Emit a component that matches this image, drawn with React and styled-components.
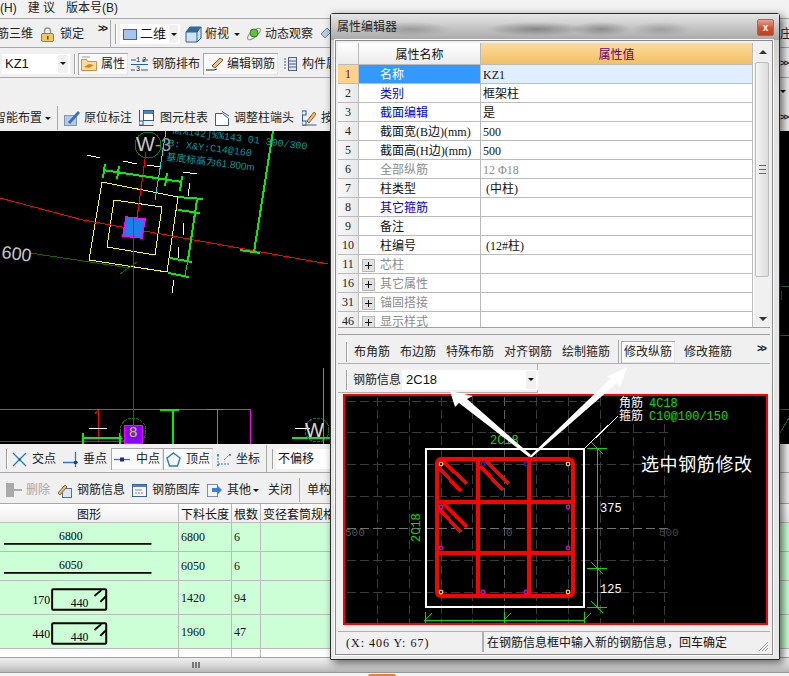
import React from "react";
import styled, { createGlobalStyle, css } from "styled-components";

const CJK = `"Liberation Sans", "Noto Sans CJK SC", sans-serif`;
const SERIF = `"Liberation Serif", "Noto Sans CJK SC", serif`;
const MONO = `"Liberation Mono", "Noto Sans CJK SC", monospace`;

const GlobalStyle = createGlobalStyle`
  html, body {
    margin: 0;
    background: #f0f0f0;
    overflow: hidden;
  }
`;

const Page = styled.div`
  position: relative;
  width: 789px;
  height: 676px;
  overflow: hidden;
  display: flex;
  flex-direction: column;
  background: #f0f0f0;
  font: 12px/16px ${CJK};
  color: #111;
`;

const MenuBar = styled.div`
  height: 18px;
  flex: none;
  display: flex;
  align-items: center;
  padding-bottom: 2px;
  box-sizing: border-box;
  background: #f2f2f2;
`;

const MenuItem = styled.span`
  margin-left: ${p => p.$ml || 0}px;
  white-space: pre;
  color: #222;
`;

const Toolbar = styled.div`
  height: ${p => p.$h}px;
  flex: none;
  box-sizing: border-box;
  display: flex;
  align-items: center;
  overflow: hidden;
  white-space: nowrap;
  background: #f0f0f0;
  padding-top: ${p => p.$pt || 0}px;
  ${p => p.$top && "border-top: 1px solid #a8a8a8;"}
  ${p => p.$line && "border-bottom: 1px solid #a8a8a8;"}
`;

const Item = styled.div`
  flex: none;
  display: flex;
  align-items: center;
  gap: ${p => (p.$gap === undefined ? 4 : p.$gap)}px;
  margin-left: ${p => p.$ml || 0}px;
  color: ${p => (p.$off ? "#a8a8a8" : "#222")};
  ${p =>
    p.$on &&
    css`
      height: 22px;
      padding: 0 3px;
      background: #fafafa;
      box-shadow: inset 1px 1px 0 #a8a8a8, inset -1px -1px 0 #e4e4e4;
    `}
`;

const Edge = styled.div`
  flex: none;
  margin-left: auto;
  width: 9px;
  font: 700 9.5px/12px ${MONO};
  letter-spacing: -2px;
  overflow: hidden;
  color: #222;
`;

const EdgeGlyph = styled(Edge)`
  font: 12px/16px ${CJK};
  letter-spacing: 0;
`;

const Grip = styled.i`
  flex: none;
  display: block;
  width: 2px;
  height: 20px;
  margin-left: ${p => p.$ml || 0}px;
  border-left: 1px solid #a0a0a0;
  border-right: 1px solid #fff;
  box-sizing: border-box;
`;

const Sep = styled.i`
  flex: none;
  display: block;
  width: 1px;
  height: ${p => p.$h || 24}px;
  margin-left: ${p => p.$ml || 0}px;
  background: #a8a8a8;
`;

const More = styled.span`
  flex: none;
  margin-left: ${p => p.$ml || 0}px;
  font: 700 10px/10px ${MONO};
  letter-spacing: -2px;
  width: 9px;
  align-self: flex-start;
  margin-top: 4px;
`;

const Caret = styled.i`
  flex: none;
  display: block;
  width: 0;
  height: 0;
  margin-left: ${p => p.$ml || 0}px;
  border: 3px solid transparent;
  border-top: 3px solid #111;
  border-bottom: 0;
`;

const Select = styled.div`
  flex: none;
  box-sizing: border-box;
  display: flex;
  align-items: center;
  width: ${p => p.$w}px;
  height: 20px;
  margin-left: ${p => p.$ml || 0}px;
  padding-left: ${p => p.$pad || 3}px;
  gap: 3px;
  background: #fff;
  font-size: ${p => p.$fs || 13}px;
`;

const SelectArrow = styled.span`
  margin-left: auto;
  margin-right: 2px;
  width: 10px;
  height: 100%;
  max-height: 18px;
  background: #f0f0f0;
  display: flex;
  align-items: center;
  justify-content: center;
`;

const Cad = styled.svg`
  display: block;
  flex: none;
  width: 789px;
  height: 313px;
  background: #000;
`;

const Table = styled.div`
  flex: none;
  height: 153px;
  background: #fff;
  font-family: ${SERIF};
`;

const TableRow = styled.div`
  display: grid;
  grid-template-columns: 179px 53px 29px 1fr;
  height: ${p => p.$h}px;
  box-sizing: border-box;
  background: ${p => (p.$green ? "#ccffd6" : p.$head ? "linear-gradient(#fff, #efefef)" : "#fff")};
  ${p => !p.$last && "border-bottom: 1px solid #bbb;"}
`;

const Cell = styled.div`
  border-right: 1px solid #bbb;
  padding-left: 2px;
  display: flex;
  align-items: center;
  overflow: hidden;
  white-space: nowrap;
  ${p => p.$center && "justify-content: center; padding-left: 0;"}
  ${p => p.$head && `font-family: ${CJK}; font-size: 12px; padding-top: 3px;`}
  &:last-child {
    border-right: 0;
  }
`;

const Shape = styled.svg`
  display: block;
  width: 179px;
  height: 100%;
`;

const HScroll = styled.div`
  flex: none;
  height: 15px;
  background: linear-gradient(#f0f0f0, #d8d8d8 50%, #b8b8b8);
  border-top: 1px solid #a0a0a0;
  box-sizing: border-box;
  padding-left: 192px;
  display: flex;
  align-items: center;
  gap: 1px;
`;

const HScrollGrip = styled.i`
  display: block;
  width: 2px;
  height: 6px;
  background: #777;
`;

const Footer = styled.div`
  flex: 1;
  background: #f4f4f4;
  border-top: 1px solid #999;
`;

const Orange = styled.i`
  position: absolute;
  left: 368px;
  bottom: 0;
  width: 28px;
  height: 2px;
  border-radius: 3px 3px 0 0;
  background: #f08030;
`;

/* floating property window */
const Dialog = styled.div`
  position: absolute;
  left: 330px;
  top: 13px;
  width: 450px;
  height: 647px;
  box-sizing: border-box;
  border: 1px solid #2c2c2c;
  border-radius: 3px 3px 0 0;
  box-shadow: 3px 3px 9px rgba(0, 0, 0, 0.6);
  background: linear-gradient(#c4c4c4, #e2e2e2 12%, #e8e8e8);
  display: flex;
  flex-direction: column;
`;

const TitleBar = styled.div`
  flex: none;
  height: 26px;
  display: flex;
  align-items: center;
  padding: 0 5px 0 6px;
  background:
    radial-gradient(ellipse 40px 7px at 80px 15px, rgba(80, 80, 80, 0.35), transparent),
    radial-gradient(ellipse 50px 7px at 205px 15px, rgba(60, 60, 60, 0.45), transparent),
    radial-gradient(ellipse 30px 7px at 270px 15px, rgba(60, 60, 60, 0.4), transparent),
    radial-gradient(ellipse 30px 7px at 330px 15px, rgba(80, 80, 80, 0.3), transparent),
    linear-gradient(#e6e6e6, #a8a8a8);
  color: #222;
  font-size: 12px;
`;

const CloseButton = styled.div`
  margin-left: auto;
  width: 17px;
  height: 17px;
  box-sizing: border-box;
  border: 1px solid #777;
  border-radius: 2px;
  background: linear-gradient(#e8a090, #d05030 55%, #c04020);
  color: #fff;
  font: 700 10px/15px ${CJK};
  text-align: center;
`;

const Client = styled.div`
  flex: none;
  position: relative;
  width: 438px;
  height: 615px;
  margin-left: 4px;
  box-sizing: border-box;
  border: 1px solid #8a8a8a;
  outline: 1px solid #fff;
  padding: 2px;
  background: #f0f0f0;
`;

const PropArea = styled.div`
  display: flex;
  height: 285px;
  box-sizing: border-box;
  border-bottom: 1px solid #a0a0a0;
  background: #fff;
`;

const PropGrid = styled.div`
  width: 415px;
  flex: none;
  overflow: hidden;
  font-family: ${SERIF};
  font-size: 12px;
`;

const PropRow = styled.div`
  display: grid;
  grid-template-columns: 21px 122px 1fr;
  height: ${p => p.$h || 19}px;
  box-sizing: border-box;
  border-bottom: 1px solid #bbb;
  border-right: 1px solid #bbb;
`;

const HeadCell = styled.div`
  display: flex;
  align-items: center;
  justify-content: center;
  font-family: ${CJK};
  box-sizing: border-box;
  padding-top: 2px;
  border-right: 1px solid #bbb;
  background: ${p => (p.$gold ? "linear-gradient(#fbdc9e, #f3bf62)" : "linear-gradient(#fff, #ebebeb)")};
  color: ${p => (p.$gold ? "#660066" : "#111")};
  &:last-child {
    border-right: 0;
  }
`;

const IndexCell = styled.div`
  display: flex;
  align-items: center;
  justify-content: center;
  border-right: 1px solid #bbb;
  background: ${p => (p.$sel ? "#fdd28a" : "linear-gradient(90deg, #f8f8f8, #e8e8e8)")};
  color: ${p => (p.$sel ? "#800040" : "#222")};
`;

const nameColors = { blue: "#0000ee", gray: "#8c8c8c", black: "#111" };

const NameCell = styled.div`
  display: flex;
  align-items: center;
  padding-left: ${p => (p.$group ? 3 : 21)}px;
  padding-top: 2px;
  box-sizing: border-box;
  gap: 5px;
  border-right: 1px solid #bbb;
  white-space: nowrap;
  background: ${p => (p.$sel ? "#3399ff" : "#fff")};
  color: ${p => (p.$sel ? "#fff" : nameColors[p.$tone])};
`;

const ValueCell = styled.div`
  display: flex;
  align-items: center;
  padding-left: 2px;
  padding-top: 2px;
  box-sizing: border-box;
  white-space: pre;
  background: ${p => (p.$sel ? "#e0efff" : "#fff")};
  color: ${p => (p.$gray ? "#8c8c8c" : "#111")};
`;

const Plus = styled.i`
  display: block;
  flex: none;
  width: 13px;
  height: 13px;
  box-sizing: border-box;
  border: 1px solid #b8b8b8;
  background:
    linear-gradient(#111, #111) center / 7px 1px no-repeat,
    linear-gradient(#111, #111) center / 1px 7px no-repeat,
    #e0e0e0;
`;

const VScroll = styled.div`
  position: relative;
  flex: none;
  width: 17px;
  margin-left: 1px;
  background: #f0f0f0;
`;

const ScrollThumb = styled.div`
  position: absolute;
  left: 1px;
  top: 19px;
  width: 14px;
  height: 215px;
  box-sizing: border-box;
  border: 1px solid #bcbcbc;
  border-radius: 2px;
  background: linear-gradient(90deg, #f4f4f4, #dcdcdc);
  display: flex;
  align-items: center;
  justify-content: center;
`;

const ThumbGrip = styled.i`
  display: block;
  width: 7px;
  height: 7px;
  border-top: 1px solid #666;
  border-bottom: 1px solid #666;
  background: linear-gradient(#666, #666) center / 7px 1px no-repeat;
`;

const ScrollArrow = styled.i`
  position: absolute;
  left: 5px;
  ${p => (p.$down ? "bottom: 6px;" : "top: 7px;")}
  width: 0;
  height: 0;
  border: 4px solid transparent;
  ${p => (p.$down ? "border-top-color: #333; border-bottom: 0;" : "border-bottom-color: #333; border-top: 0;")}
`;

const RebarBand = styled.div`
  margin-top: 6px;
  height: 30px;
  box-sizing: border-box;
  border-top: 1px solid #a0a0a0;
  border-bottom: 1px solid #b0b0b0;
  display: flex;
  align-items: center;
  overflow: hidden;
  white-space: nowrap;
  padding: 6px 0 0 8px;
`;

const InfoBand = styled.div`
  width: 200px;
  height: 29px;
  box-sizing: border-box;
  border-right: 1px solid #b0b0b0;
  border-bottom: 1px solid #b0b0b0;
  display: flex;
  align-items: center;
  padding: 3px 0 0 8px;
`;

const SectionView = styled.svg`
  display: block;
  width: 425px;
  height: 231px;
  margin: 1px 0 0 5px;
  box-sizing: border-box;
  background: #000;
`;

const Status = styled.div`
  display: flex;
  margin-top: 6px;
  height: 21px;
  box-sizing: border-box;
  border-top: 1px solid #b0b0b0;
  align-items: center;
  white-space: nowrap;
`;

const StatusCoord = styled.div`
  width: 146px;
  flex: none;
  box-sizing: border-box;
  padding: 2px 0 0 8px;
  font: 12px/16px ${SERIF};
  letter-spacing: 1px;
  border-right: 2px solid #b0b0b0;
  height: 100%;
  display: flex;
  align-items: center;
`;

const StatusText = styled.div`
  padding: 2px 0 0 3px;
  flex: 1;
`;

const ResizeGrip = styled.svg`
  flex: none;
  width: 12px;
  height: 12px;
  align-self: flex-end;
  margin-right: 1px;
`;

const Overlay = styled.svg`
  position: absolute;
  left: -1px;
  top: -1px;
  width: 450px;
  height: 647px;
  pointer-events: none;
`;

const Ico = ({ w = 16, h = 16, children }) => (
  <svg width={w} height={h} viewBox={`0 0 ${w} ${h}`} style={{ flex: "none", display: "block" }}>
    {children}
  </svg>
);

const LockIcon = () => (
  <Ico w={13} h={15}>
    <path d="M3.5 7V4a3 3 0 0 1 6 0v3" fill="none" stroke="#999" strokeWidth="1.5" />
    <rect x=".5" y="6.5" width="12" height="8" rx="1.5" fill="#f0c860" stroke="#a08030" />
    <rect x="6" y="9" width="1.5" height="3.5" fill="#604010" />
  </Ico>
);

const PlaneIcon = () => (
  <Ico w={14} h={11}>
    <rect x=".5" y=".5" width="13" height="10" fill="#a9c4ee" stroke="#3b64b0" />
  </Ico>
);

const CubeIcon = () => (
  <Ico w={17} h={17}>
    <path d="M1 6 5 1h11v11l-4 4H1z" fill="#cfe2f5" stroke="#2f6290" />
    <path d="M1 6h11v10M12 6l4-5" fill="none" stroke="#2f6290" />
    <path d="M1 6 5 1h11l-4 5z" fill="#2f6a9a" />
  </Ico>
);

const OrbitIcon = () => (
  <Ico w={16} h={16}>
    <ellipse cx="8" cy="8" rx="8" ry="3" fill="none" stroke="#9a9a9a" transform="rotate(-40 8 8)" />
    <circle cx="8" cy="7" r="4" fill="#60c040" stroke="#308020" />
  </Ico>
);

const ArrowheadIcon = () => (
  <Ico w={12} h={16}>
    <path d="M1 8 7 2l4 4-6 6z" fill="#b8cce4" stroke="#6080a0" />
  </Ico>
);

const AttrIcon = () => (
  <Ico w={16} h={15}>
    <path d="M.5 3.5h5l1 2h9v9H.5z" fill="#f8dca0" stroke="#d09040" />
    <path d="M3 11 8 8l5 1-5 3z" fill="#e08020" />
    <path d="M1 1h8" stroke="#a0a0a0" />
  </Ico>
);

const LayoutIcon = () => (
  <Ico w={17} h={16}>
    <path d="M0 4h5M11 4h6M0 14h4M10 14h7M0 8.5h17" stroke="#1d5fa8" />
    <text x="5" y="6" fontSize="7" fill="#111" fontFamily={MONO}>1</text>
    <text x="11" y="6" fontSize="7" fill="#111" fontFamily={MONO}>2</text>
    <text x="5" y="15" fontSize="7" fill="#111" fontFamily={MONO}>3</text>
  </Ico>
);

const PencilIcon = () => (
  <Ico w={17} h={15}>
    <path d="M6 10 14 2l3 2-8 8z" fill="#f0c090" stroke="#805030" />
    <path d="M0 14h8l3-1" fill="none" stroke="#222" />
  </Ico>
);

const ListIcon = () => (
  <Ico w={14} h={14}>
    <rect x="5.5" y=".5" width="8" height="13" fill="#dce8f8" stroke="#506080" />
    <path d="M6 4h7M6 7h7M6 10h7M1 2h2M1 5h2M1 8h2M1 11h2" stroke="#506080" />
  </Ico>
);

const InPlaceIcon = () => (
  <Ico w={16} h={16}>
    <rect x=".5" y="5.5" width="12" height="10" fill="#b8c8e0" stroke="#8098b8" />
    <path d="M4 12 14 1l2 2L6 14z" fill="#3070d0" />
  </Ico>
);

const ColumnTableIcon = () => (
  <Ico w={15} h={16}>
    <rect x="4.5" y=".5" width="10" height="10" fill="#fff" stroke="#305aa0" />
    <rect x="5" y="1" width="9" height="3" fill="#5080c8" />
    <path d="M.5 0v15.5h14" fill="none" stroke="#305aa0" />
    <rect x="0" y="11" width="4" height="4" fill="#fff" stroke="#2050b0" />
  </Ico>
);

const ColumnEndIcon = () => (
  <Ico w={15} h={15}>
    <path d="M.5 2.5h7l6 5v7H.5z" fill="#fff" stroke="#305aa0" />
    <path d="M7 .5 14 5" stroke="#305aa0" />
  </Ico>
);

const EditBoxIcon = () => (
  <Ico w={15} h={16}>
    <path d="M.5 1v14h14" fill="none" stroke="#305aa0" />
    <rect x="0" y="1" width="4" height="4" fill="#fff" stroke="#2050b0" />
    <rect x="0" y="11" width="4" height="4" fill="#fff" stroke="#2050b0" />
    <path d="M5 11 12 2l2 2-7 9z" fill="#f0c060" stroke="#906020" />
  </Ico>
);

const CrossIcon = () => (
  <Ico w={15} h={15}>
    <path d="M1 1l13 13M14 1 1 14" stroke="#2a7ad0" strokeWidth="1.3" />
    <circle cx="7.5" cy="7.5" r="1" fill="#204080" />
  </Ico>
);

const PerpIcon = () => (
  <Ico w={15} h={15}>
    <path d="M0 10.5h15M12.5 0v15" stroke="#2a7ad0" strokeWidth="1.3" />
    <rect x="11" y="9" width="3" height="3" fill="#204080" />
  </Ico>
);

const MidIcon = () => (
  <Ico w={16} h={7}>
    <path d="M0 3.5h16" stroke="#2a7ad0" strokeWidth="1.3" />
    <rect x="6" y="1.5" width="4" height="4" fill="#1a2e90" />
  </Ico>
);

const VertexIcon = () => (
  <Ico w={15} h={15}>
    <path d="M7.5 1 14 6l-2.5 8h-8L1 6z" fill="none" stroke="#2a7ad0" strokeWidth="1.4" />
  </Ico>
);

const CoordIcon = () => (
  <Ico w={16} h={15}>
    <path d="M2 3v9h12M14 2 8 8" fill="none" stroke="#2a7ad0" strokeDasharray="2 1" />
    <circle cx="2" cy="3" r="1" fill="#2a7ad0" />
    <circle cx="14" cy="3" r="1" fill="#2a7ad0" />
    <circle cx="2" cy="13" r="1" fill="#2a7ad0" />
  </Ico>
);

const DeleteIcon = () => (
  <Ico w={16} h={14}>
    <rect x="0" y="0" width="8" height="14" fill="#aaa" />
    <path d="M8 7h8" stroke="#aaa" strokeWidth="2" />
  </Ico>
);

const RebarInfoIcon = () => (
  <Ico w={15} h={15}>
    <rect x="5.5" y="5.5" width="9" height="9" fill="#dce8f8" stroke="#5070a0" />
    <path d="M1 10 8 2l2 2-7 8z" fill="#e8c070" stroke="#806030" />
  </Ico>
);

const LibraryIcon = () => (
  <Ico w={15} h={13}>
    <rect x=".5" y=".5" width="14" height="12" fill="#f8f8f8" stroke="#3a60a0" />
    <rect x="1" y="1" width="13" height="2" fill="#5080c0" />
    <path d="M3 6h7M3 9h2M6 9h2M9 9h2" stroke="#909090" />
  </Ico>
);

const OtherIcon = () => (
  <Ico w={15} h={13}>
    <rect x=".5" y=".5" width="10" height="12" fill="#f4f4f4" stroke="#8090a8" />
    <path d="M5 4h5V1l5 5-5 5V8H5z" fill="#3a80d8" />
  </Ico>
);

const gridXs = [377, 409, 441, 472, 504, 536, 568, 600, 633, 664];
const gridYs = [402, 433, 465, 497, 529, 561, 593];

const dots = [
  [441, 465, "#ffe000"], [568, 465, "#ffe000"], [441, 593, "#ffe000"], [568, 593, "#ffe000"],
  [483, 465, "#2020ff"], [526, 465, "#2020ff"],
  [441, 508, "#e000e0"], [568, 508, "#e000e0"], [441, 549, "#e000e0"], [568, 549, "#e000e0"],
  [483, 593, "#e000e0"], [526, 593, "#e000e0"],
];

const hooks = [
  "M438 468 461 492M443 462 467 485",
  "M480 467 503 491M486 462 509 485",
  "M438 509 461 533M444 505 467 528",
];

const Tick = ({ x, y }) => (
  <>
    <path d={`M${x - 10} ${y}.5h20`} stroke="#00e000" />
    <path d={`M${x - 6} ${y - 6}l12 12`} stroke="#00e000" />
  </>
);

const SectionDrawing = () => (
  <SectionView viewBox="343 395 425 231" shapeRendering="crispEdges">
    {gridXs.map(x => (
      <path key={x} d={`M${x}.5 ${x > 610 ? 425 : 398}V624`} stroke={x === 504 ? "#5c5c5c" : "#3a3a3a"} strokeDasharray="9 4" />
    ))}
    {gridYs.map(y => (
      <path key={y} d={`M347 ${y}.5H${y === 402 ? 600 : 670}`} stroke={y === 529 ? "#707070" : "#3a3a3a"} strokeDasharray="9 4" />
    ))}
    <text x="345" y="537" fontSize="11" fill="#555" fontFamily={MONO}>500</text>
    <text x="506" y="537" fontSize="11" fill="#555" fontFamily={MONO}>0</text>
    <text x="659" y="537" fontSize="11" fill="#444" fontFamily={MONO}>500</text>

    <rect x="425.5" y="449.5" width="158" height="158" fill="none" stroke="#fff" strokeWidth="2" />
    <rect x="437" y="460" width="136" height="137" rx="4" fill="none" stroke="#f00" strokeWidth="4" shapeRendering="auto" />
    <path d="M478 460V597M529 460V597M437 503H571M437 554H571" stroke="#f00" strokeWidth="4" fill="none" />
    {hooks.map(d => (
      <path key={d} d={d} stroke="#f00" strokeWidth="3.5" fill="none" />
    ))}
    {dots.map(([x, y, c]) => (
      <circle key={`${x}-${y}`} cx={x} cy={y} r="1.8" fill="#000" stroke={c} strokeWidth="1.2" shapeRendering="auto" />
    ))}

    <text x="490" y="445" fontSize="12" fill="#00e000" fontFamily={MONO}>2C18</text>
    <text x="420" y="543" fontSize="12" fill="#00e000" fontFamily={MONO} transform="rotate(-90 420 543)">2C18</text>

    <path d="M585 449 618 417" stroke="#fff" />
    <text x="619" y="408" fontSize="12" fill="#fff" fontFamily={CJK}>角筋</text>
    <text x="649" y="408" fontSize="12" fill="#00e000" fontFamily={MONO}>4C18</text>
    <text x="619" y="421" fontSize="12" fill="#fff" fontFamily={CJK}>箍筋</text>
    <text x="649" y="421" fontSize="12" fill="#00e000" fontFamily={MONO}>C10@100/150</text>
    <text x="641" y="472" fontSize="18" fill="#fff" fontFamily={CJK} letterSpacing=".6">选中钢筋修改</text>

    <path d="M597.5 449V608" stroke="#00e000" />
    <Tick x={597} y={449} />
    <Tick x={597} y={569} />
    <Tick x={597} y={608} />
    <text x="600" y="513" fontSize="12" fill="#fff" fontFamily={MONO}>375</text>
    <text x="600" y="594" fontSize="12" fill="#fff" fontFamily={MONO}>125</text>

    <path d="M424 621.5H584" stroke="#00e000" />
    {[425, 504, 584].map(x => (
      <path key={x} d={`M${x}.5 613V625M${x - 1} 622l8-8`} stroke="#00e000" />
    ))}
    <rect x="344" y="396" width="423" height="229" fill="none" stroke="#f00" strokeWidth="2" />
  </SectionView>
);

const rotText = (x, y, a) => `rotate(${a} ${x} ${y})`;

const PlanDrawing = () => (
  <Cad viewBox="0 131 789 313" shapeRendering="crispEdges">
    <g fill="none">
      <path d="M102 182 178 197 167 272 89 260Z" stroke="#ffff00" />
      <path d="M114 200 162 207 155 255 107 247Z" stroke="#ffff00" />
      <path d="M30 253 130 268" stroke="#0a6a0a" />
      <path d="M120 274 137 262" stroke="#0a6a0a" />
      <path d="M166 131 155 200" stroke="#00e8e8" />
      <path d="M0 198 83 220 328 264" stroke="#ff0000" />
      <path d="M146 152 137 218 133.5 225" stroke="#ff0000" />
      <path d="M0 409.5H250.5V444" stroke="#ff00ff" />
      <path d="M0 441H133M98.5 410V441M95 414l3-4" stroke="#ff0000" />
      <g stroke="#00f000" strokeWidth="2">
        <path d="M103 170 182 182M273 131 254 252M197 200 188 260M178 210 200 213M178 197 203 199" />
        <path d="M170 258 192 262M168 273 189 277M240 250 260 253" />
        <path d="M105 164 103 178M119 166 117 179M167 173 165 186M182 176 180 191" />
        <path d="M82 438H122M83 433V444M120 433V444M160 410H179M173 410V444M292 438H330" />
      </g>
      <path d="M188 260 185 275M207 409.5H223M217.5 410V444" stroke="#00e000" />
      <g stroke="#fff">
        <path d="M87 155 100 158M123 161 137 164M147 165 160 167M183 172 197 174M190 183 188 196" />
        <path d="M184 223 183 235M179 247 178 258M174 280 172 293M89 428.5H107M295 428.5H310" />
      </g>
      <circle cx="148" cy="145" r="13" stroke="#0a7a0a" />
      <circle cx="133" cy="431" r="13" stroke="#0a7a0a" strokeDasharray="3 1" />
      <circle cx="317" cy="430" r="12" stroke="#0a7a0a" strokeDasharray="3 1" />
      <path d="M323.5 368V444" stroke="#20b0b0" />
      <path d="M781 286H789M781 291V300M780 335H789M780 409.5H789M780 433 789 418" stroke="#3a6a3a" />
    </g>
    <path d="M126 217 145 219 142 238 123 236Z" fill="#1a7fe8" stroke="#ff00ff" strokeWidth="1.5" />
    <rect x="124.5" y="425.5" width="18" height="18" fill="#8a00ff" stroke="#ff00ff" />
    <path d="M133.5 218V441" fill="none" stroke="#ff0000" strokeWidth="1" />
    <text x="129" y="437" fontSize="15" fill="#b0e000" fontFamily={CJK}>8</text>
    <text x="136" y="151" fontSize="20" fill="#c8c8c8" fontFamily={CJK}>W</text>
    <text x="155" y="151" fontSize="18" fill="#9a9a9a" fontFamily={CJK}>-3</text>
    <text x="305" y="437" fontSize="20" fill="#d8d8d8" fontFamily={CJK}>W</text>
    <text x="1" y="258" fontSize="18" fill="#c8c8c8" fontFamily={CJK} transform={rotText(1, 258, 7)}>600</text>
    <g fill="#009c9c" fontFamily={MONO} fontSize="10">
      <text x="172" y="133" transform={rotText(172, 133, 7)}>高%142]%%143 01  300/300</text>
      <text x="168" y="146" transform={rotText(168, 146, 7)}>B: X&amp;Y:C14@160</text>
      <text x="166" y="160" fontFamily={CJK} transform={rotText(166, 160, 7)}>基底标高为61.800m</text>
    </g>
  </Cad>
);

const BarLine = ({ label }) => (
  <Shape viewBox="0 0 179 28">
    <text x="70" y="17" fontSize="12" textAnchor="middle" fontFamily={SERIF}>{label}</text>
    <path d="M2 21H152" stroke="#000" strokeWidth="2" />
  </Shape>
);

const BarStirrup = ({ left }) => (
  <Shape viewBox="0 0 179 33">
    <text x="31" y="23" fontSize="12" fontFamily={SERIF}>{left}</text>
    <rect x="51" y="8" width="55" height="21" rx="1" fill="none" stroke="#000" strokeWidth="2" />
    <path d="M94 15l7-6M100 21l6-6" stroke="#000" strokeWidth="2" />
    <text x="70" y="26" fontSize="12" fontFamily={SERIF}>440</text>
  </Shape>
);

const props = [
  { n: "1", name: "名称", tone: "blue", value: "KZ1", sel: true },
  { n: "2", name: "类别", tone: "blue", value: "框架柱" },
  { n: "3", name: "截面编辑", tone: "blue", value: "是" },
  { n: "4", name: "截面宽(B边)(mm)", tone: "black", value: "500" },
  { n: "5", name: "截面高(H边)(mm)", tone: "black", value: "500" },
  { n: "6", name: "全部纵筋", tone: "gray", value: "12 Φ18", gray: true },
  { n: "7", name: "柱类型", tone: "black", value: " (中柱)" },
  { n: "8", name: "其它箍筋", tone: "blue", value: "" },
  { n: "9", name: "备注", tone: "black", value: "" },
  { n: "10", name: "柱编号", tone: "black", value: " (12#柱)" },
  { n: "11", name: "芯柱", tone: "gray", value: "", group: true },
  { n: "16", name: "其它属性", tone: "gray", value: "", group: true },
  { n: "31", name: "锚固搭接", tone: "gray", value: "", group: true },
  { n: "46", name: "显示样式", tone: "gray", value: "", group: true },
];

const PropertyGrid = () => (
  <PropArea>
    <PropGrid>
      <PropRow $h={22}>
        <HeadCell />
        <HeadCell>属性名称</HeadCell>
        <HeadCell $gold>属性值</HeadCell>
      </PropRow>
      {props.map(p => (
        <PropRow key={p.n}>
          <IndexCell $sel={p.sel}>{p.n}</IndexCell>
          <NameCell $sel={p.sel} $tone={p.tone} $group={p.group}>
            {p.group && <Plus />}
            {p.name}
          </NameCell>
          <ValueCell $sel={p.sel} $gray={p.gray}>{p.value}</ValueCell>
        </PropRow>
      ))}
    </PropGrid>
    <VScroll>
      <ScrollArrow />
      <ScrollThumb>
        <ThumbGrip />
      </ScrollThumb>
      <ScrollArrow $down />
    </VScroll>
  </PropArea>
);

const PropertyDialog = () => (
  <Dialog>
    <TitleBar>
      属性编辑器
      <CloseButton>x</CloseButton>
    </TitleBar>
    <Client>
      <PropertyGrid />
      <RebarBand>
        <Grip />
        <Item $ml={6}>布角筋</Item>
        <Item $ml={10}>布边筋</Item>
        <Item $ml={10}>特殊布筋</Item>
        <Item $ml={10}>对齐钢筋</Item>
        <Item $ml={10}>绘制箍筋</Item>
        <Sep $ml={8} />
        <Item $ml={2} $on>修改纵筋</Item>
        <Item $ml={9}>修改箍筋</Item>
        <More $ml={25}>&gt;&gt;</More>
      </RebarBand>
      <InfoBand>
        <Grip />
        <Item $ml={5}>钢筋信息</Item>
        <Select $w={136} $ml={1} $pad={4}>
          2C18
          <SelectArrow><Caret /></SelectArrow>
        </Select>
      </InfoBand>
      <SectionDrawing />
      <Status>
        <StatusCoord>(X: 406 Y: 67)</StatusCoord>
        <StatusText>在钢筋信息框中输入新的钢筋信息，回车确定</StatusText>
        <ResizeGrip viewBox="0 0 12 12">
          <path d="M11 2 2 11M11 5 5 11M11 8 8 11" stroke="#a0a0a0" />
        </ResizeGrip>
      </Status>
    </Client>
    <Overlay viewBox="330 13 450 647">
      <path d="M529 457 459 403 455 407 450 391 473 396 467 399 531 455Z" fill="#fff" />
      <path d="M529 457 611 378 606 377 627 367 620 388 617 383 532 457Z" fill="#fff" />
    </Overlay>
  </Dialog>
);

export default function App() {
  return (
    <Page>
      <GlobalStyle />
      <MenuBar>
        <MenuItem>(H)</MenuItem>
        <MenuItem $ml={11}>建 议</MenuItem>
        <MenuItem $ml={11}>版本号(B)</MenuItem>
      </MenuBar>

      <Toolbar $h={30} $top $line $pt={2}>
        <Item $ml={-3}>筋三维</Item>
        <Item $ml={8} $gap={6}><LockIcon />锁定</Item>
        <More $ml={14}>&gt;&gt;</More>
        <Sep $ml={3} $h={28} />
        <Grip $ml={4} />
        <Select $w={60} $ml={3}>
          <PlaneIcon />
          二维
          <SelectArrow><Caret /></SelectArrow>
        </Select>
        <Item $ml={5} $gap={3}><CubeIcon />俯视</Item>
        <Caret $ml={5} />
        <Item $ml={6} $gap={3}><OrbitIcon />动态观察</Item>
        <Item $ml={7}><ArrowheadIcon /></Item>
        <EdgeGlyph>庄</EdgeGlyph>
      </Toolbar>

      <Toolbar $h={30} $line $pt={2}>
        <Select $w={68} $ml={2}>
          KZ1
          <SelectArrow><Caret /></SelectArrow>
        </Select>
        <Grip $ml={4} />
        <Item $ml={2} $on><AttrIcon />属性</Item>
        <Item $ml={3}><LayoutIcon />钢筋排布</Item>
        <Item $ml={3} $on><PencilIcon />编辑钢筋</Item>
        <Item $ml={5} $gap={5}><ListIcon />构件属</Item>
        <Edge>&gt;&gt;</Edge>
      </Toolbar>

      <Toolbar $h={27}>
        <Edge><Caret /></Edge>
      </Toolbar>

      <Toolbar $h={26}>
        <Item $ml={-6}>智能布置</Item>
        <Caret $ml={3} />
        <Sep $ml={6} />
        <Item $ml={6}><InPlaceIcon />原位标注</Item>
        <Item $ml={7} $gap={6}><ColumnTableIcon />图元柱表</Item>
        <Item $ml={7}><ColumnEndIcon />调整柱端头</Item>
        <Item $ml={8}><EditBoxIcon />按</Item>
        <Edge>&gt;&gt;</Edge>
      </Toolbar>

      <PlanDrawing />

      <Toolbar $h={29} $line $pt={2}>
        <Grip $ml={6} />
        <Item $ml={4} $gap={5}><CrossIcon />交点</Item>
        <Item $ml={7} $gap={5}><PerpIcon />垂点</Item>
        <Item $ml={4} $on $gap={6}><MidIcon />中点</Item>
        <Item $on $gap={5}><VertexIcon />顶点</Item>
        <Item $ml={3}><CoordIcon />坐标</Item>
        <Sep $ml={6} $h={28} />
        <Grip $ml={5} />
        <Select $w={60} $ml={2} $pad={2} $fs={12}>不偏移</Select>
      </Toolbar>

      <Toolbar $h={31} $line $pt={4}>
        <Item $ml={6} $off><DeleteIcon />删除</Item>
        <Item $ml={7} $gap={5}><RebarInfoIcon />钢筋信息</Item>
        <Item $ml={7} $gap={5}><LibraryIcon />钢筋图库</Item>
        <Item $ml={7} $gap={5}><OtherIcon />其他</Item>
        <Caret $ml={2} />
        <Item $ml={9}>关闭</Item>
        <Sep $ml={7} />
        <Item $ml={7}>单构件</Item>
      </Toolbar>

      <Table>
        <TableRow $h={19} $head>
          <Cell $head $center>图形</Cell>
          <Cell $head>下料长度</Cell>
          <Cell $head>根数</Cell>
          <Cell $head>变径套筒规格</Cell>
        </TableRow>
        <TableRow $h={29} $green>
          <Cell><BarLine label="6800" /></Cell>
          <Cell>6800</Cell>
          <Cell>6</Cell>
          <Cell />
        </TableRow>
        <TableRow $h={29} $green>
          <Cell><BarLine label="6050" /></Cell>
          <Cell>6050</Cell>
          <Cell>6</Cell>
          <Cell />
        </TableRow>
        <TableRow $h={34} $green>
          <Cell><BarStirrup left="170" /></Cell>
          <Cell>1420</Cell>
          <Cell>94</Cell>
          <Cell />
        </TableRow>
        <TableRow $h={34} $green>
          <Cell><BarStirrup left="440" /></Cell>
          <Cell>1960</Cell>
          <Cell>47</Cell>
          <Cell />
        </TableRow>
        <TableRow $h={8} $last>
          <Cell />
          <Cell />
          <Cell />
          <Cell />
        </TableRow>
      </Table>

      <HScroll>
        <HScrollGrip />
        <HScrollGrip />
        <HScrollGrip />
      </HScroll>
      <Footer />
      <Orange />
      <PropertyDialog />
    </Page>
  );
}
